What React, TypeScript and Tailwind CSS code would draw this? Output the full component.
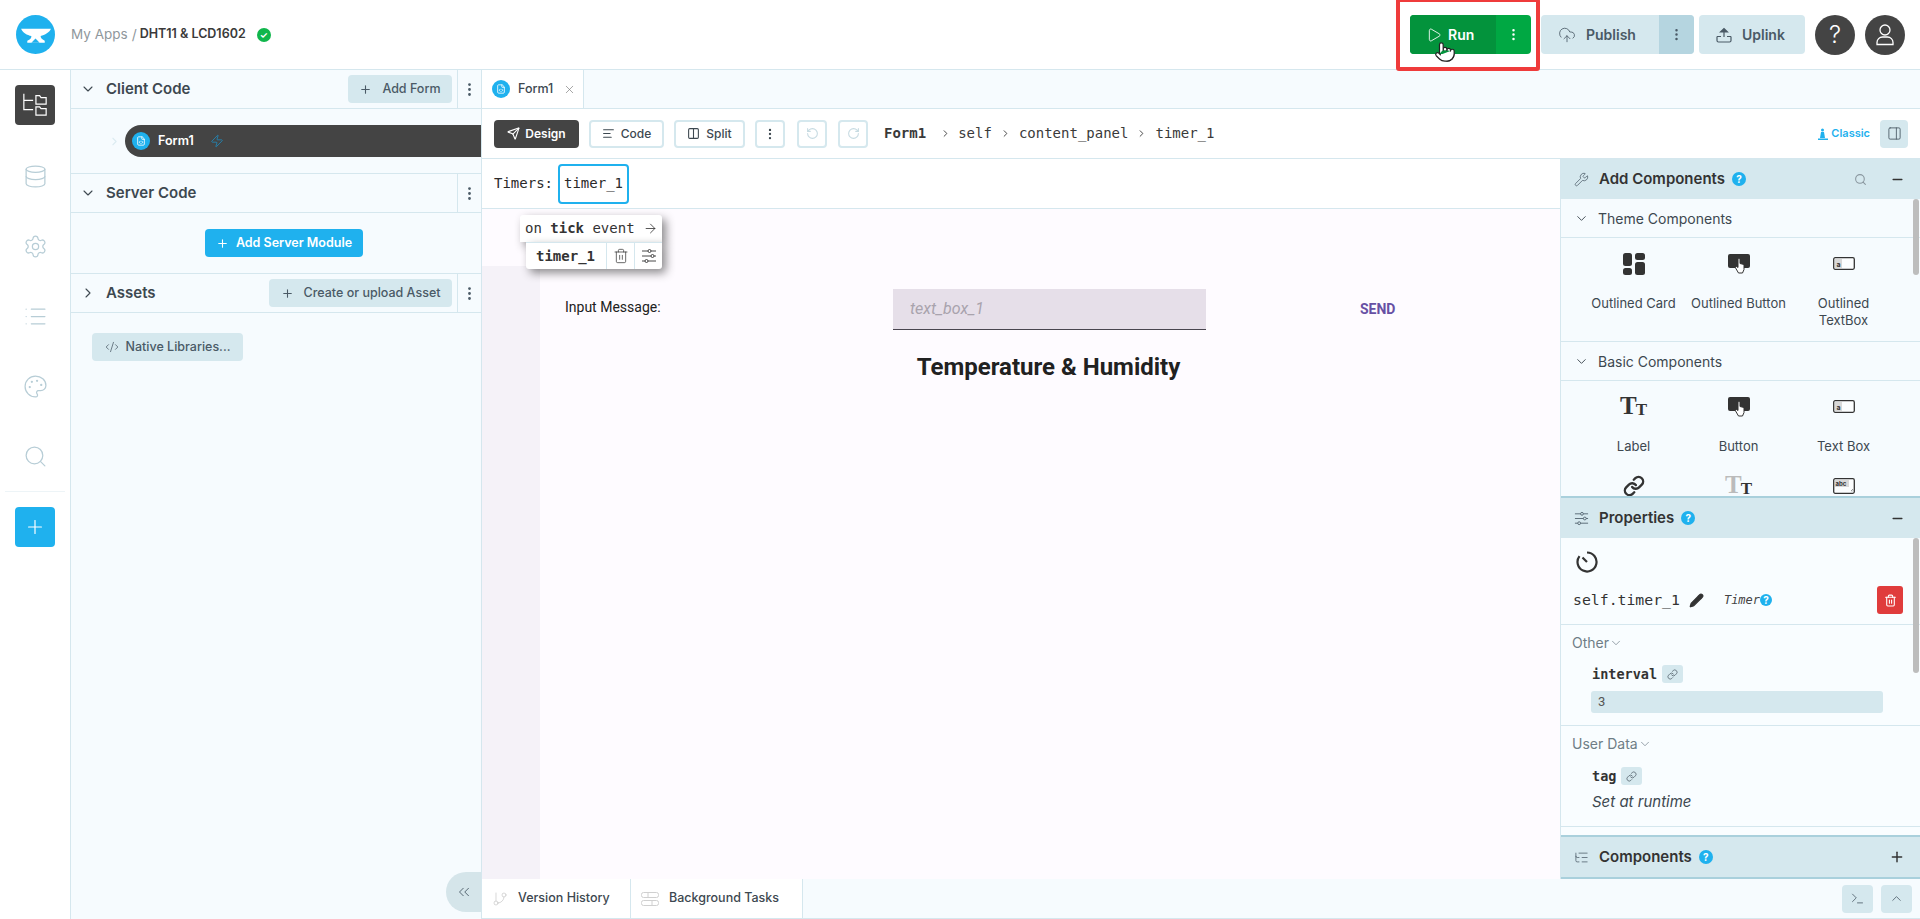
import React from "react";
import {
  AlignLeft,
  ArrowRight,
  ChevronDown,
  ChevronRight,
  ChevronUp,
  ChevronsLeft,
  CloudUpload,
  CodeXml,
  Columns2,
  Database,
  EllipsisVertical,
  FileCode,
  GitBranch,
  Link,
  List,
  ListTree,
  Minus,
  Palette,
  PanelRight,
  Pencil,
  Play,
  Plus,
  Pointer,
  RotateCcw,
  RotateCw,
  Search,
  Send,
  Settings,
  Terminal,
  Trash2,
  Wrench,
  X,
  Zap,
} from "lucide-react";

const sans = "font-['Inter','Open_Sans',sans-serif]";
const mono = "font-['DejaVu_Sans_Mono','Liberation_Mono',monospace]";

function AnvilLogo() {
  return (
    <svg viewBox="0 0 38 38" className="h-[39px] w-[39px]">
      <circle cx="19" cy="19" r="19" fill="#1fb1ee" />
      <path d="M5 13.5h29c-1 3.5-6 6-10 7 0 2 1 3 4 4.5v2H11v-2c3-1 4-2.5 4-4.5-4-.5-9-3.5-10-7z" fill="#fff" />
      <path d="M15 27l4-4 4 4z" fill="#1fb1ee" />
    </svg>
  );
}

function TreeIcon() {
  return (
    <svg viewBox="0 0 28 28" fill="none" stroke="#fff" strokeWidth="1.3" className="h-[26px] w-[28px]">
      <path d="M2 2v17h10M2 9h10" />
      <path d="M15 4h4l1.5 2H26v7H15z" />
      <path d="M15 16h4l1.5 2H26v7H15z" />
    </svg>
  );
}

function SlidersIcon({ size = 15 }: { size?: number }) {
  return (
    <svg viewBox="0 0 16 16" fill="none" stroke="currentColor" strokeWidth="0.9" width={size} height={size}>
      <path d="M1 3h6M10 3h5M1 8h9M13 8h2M1 13h3M7 13h8" />
      <circle cx="8.5" cy="3" r="1.5" />
      <circle cx="11.5" cy="8" r="1.5" />
      <circle cx="5.5" cy="13" r="1.5" />
    </svg>
  );
}

function Badge({ size = "h-[14px] w-[14px]" }: { size?: string }) {
  return (
    <span className={`${size} flex items-center justify-center rounded-full bg-[#1fb1ee] text-[10px] font-bold text-white ${sans}`}>
      ?
    </span>
  );
}

function SectionHead({ title, open = true, action }: { title: string; open?: boolean; action?: string }) {
  return (
    <div className="flex h-[39px] items-center border-b border-[#d5e7ee]">
      <div className="flex w-[25px] justify-end text-[#3d4850]">
        {open ? <ChevronDown size={16} strokeWidth={1.6} /> : <ChevronRight size={16} strokeWidth={1.6} />}
      </div>
      <span className="ml-[10px] flex-1 text-[15px] font-semibold text-[#3d4850]">{title}</span>
      {action && (
        <button className="mr-[5px] flex h-[28px] items-center gap-[10px] rounded-[4px] bg-[#d5e8ee] px-[11.5px] text-[12.5px] font-medium text-[#4a5a66]">
          <Plus size={13} />
          {action}
        </button>
      )}
      <div className="flex h-full w-[24px] items-center justify-center border-l border-[#d5e7ee] text-[#4a5a66]">
        <EllipsisVertical size={17} />
      </div>
    </div>
  );
}

function SideIcon({ children }: { children: React.ReactNode }) {
  return <div className="flex h-[70px] w-full items-center justify-center text-[#b7cdd6]">{children}</div>;
}

function Sidebar() {
  return (
    <aside className="flex w-[71px] flex-col items-center border-r border-[#d5e7ee] bg-white pt-[15px]">
      <div className="mb-[16px] flex h-[40px] w-[40px] items-center justify-center rounded-[4px] bg-[#444444]">
        <TreeIcon />
      </div>
      <div className="w-full">
        <SideIcon><Database size={25} strokeWidth={1.2} /></SideIcon>
        <SideIcon><Settings size={25} strokeWidth={1.2} /></SideIcon>
        <SideIcon><List size={25} strokeWidth={1.2} /></SideIcon>
        <SideIcon><Palette size={25} strokeWidth={1.2} /></SideIcon>
        <SideIcon><Search size={25} strokeWidth={1.2} /></SideIcon>
      </div>
      <div className="mb-[15px] h-px w-[60px] bg-[#edf4f7]" />
      <div className="flex h-[40px] w-[40px] items-center justify-center rounded-[4px] bg-[#1fb1ee] text-white">
        <Plus size={22} strokeWidth={1.3} />
      </div>
    </aside>
  );
}

function LeftPanel() {
  return (
    <section className="relative flex w-[410px] flex-col bg-[#f6fbfe]">
      <SectionHead title="Client Code" action="Add Form" />
      <div className="flex h-[65px] items-center border-b border-[#d5e7ee] pl-[37px]">
        <ChevronRight size={13} className="mr-[4px] text-[#dcebf1]" />
        <div className="flex h-[32px] flex-1 items-center rounded-l-full bg-[#444444] pl-[7px]">
          <span className="flex h-[18px] w-[18px] items-center justify-center rounded-full bg-[#1fb1ee] text-white">
            <FileCode size={10} />
          </span>
          <span className="ml-[8px] text-[12.5px] font-semibold text-white">Form1</span>
          <Zap size={14} strokeWidth={1.3} className="ml-[16px] text-[#1f8fc4]" />
        </div>
      </div>
      <SectionHead title="Server Code" />
      <div className="flex h-[61px] items-center justify-center border-b border-[#d5e7ee] pl-[16px]">
        <button className="flex h-[28px] w-[158px] items-center justify-center gap-[7px] rounded-[4px] bg-[#1fb1ee] text-[12.5px] font-semibold text-white">
          <Plus size={13} />
          Add Server Module
        </button>
      </div>
      <SectionHead title="Assets" open={false} action="Create or upload Asset" />
      <div className="pl-[21px] pt-[20px]">
        <button className="flex h-[28px] w-[151px] items-center justify-center gap-[7px] rounded-[4px] bg-[#d5e8ee] text-[12.5px] font-medium text-[#4a5a66]">
          <CodeXml size={14} strokeWidth={1.3} />
          Native Libraries...
        </button>
      </div>
      <div className="absolute bottom-[7px] right-0 flex h-[40px] w-[35px] items-center justify-center rounded-l-full bg-[#d5e5ea] text-[#4a5a66]">
        <ChevronsLeft size={18} strokeWidth={1.2} />
      </div>
    </section>
  );
}

function ToolBtn({ children, width }: { children: React.ReactNode; width: string }) {
  return (
    <button className={`flex h-[28px] items-center justify-center gap-[6px] rounded-[4px] border-2 border-[#d5e8ee] bg-white text-[12px] font-medium text-[#3d4850] ${width}`}>
      {children}
    </button>
  );
}

function Toolbar() {
  return (
    <div className="flex h-[50px] shrink-0 items-center border-b border-[#d5e7ee] bg-white pl-[12px] pr-[12px]">
      <button className="flex h-[28px] w-[85px] items-center justify-center gap-[5px] rounded-[4px] bg-[#444444] text-[12px] font-semibold text-white">
        <Send size={13} />
        Design
      </button>
      <div className="ml-[10px] flex gap-[10px]">
        <ToolBtn width="w-[75px]"><AlignLeft size={13} />Code</ToolBtn>
        <ToolBtn width="w-[71px]"><Columns2 size={13} />Split</ToolBtn>
        <ToolBtn width="w-[30px]"><EllipsisVertical size={14} /></ToolBtn>
      </div>
      <div className="ml-[12px] flex gap-[11px]">
        <ToolBtn width="w-[30px]"><RotateCcw size={13} className="text-[#c7dbe2]" /></ToolBtn>
        <ToolBtn width="w-[30px]"><RotateCw size={13} className="text-[#c7dbe2]" /></ToolBtn>
      </div>
      <div className={`ml-[16px] flex flex-1 items-center text-[14px] text-[#3a3a3a] ${mono}`}>
        <b>Form1</b>
        <ChevronRight size={11} className="ml-[14px] mr-[7px]" />
        self
        <ChevronRight size={11} className="mx-[8px]" />
        content_panel
        <ChevronRight size={11} className="mx-[8px]" />
        timer_1
      </div>
      <span className="mr-[10px] flex items-center gap-[3px] text-[11px] font-semibold text-[#1fb1ee]">
        <svg viewBox="0 0 10 12" fill="currentColor" className="h-[12px] w-[10px]">
          <circle cx="4.5" cy="2" r="1.5" />
          <path d="M3 4h3l1 6H2zM0 10.5h10V12H0z" />
        </svg>
        Classic
      </span>
      <div className="flex h-[28px] w-[28px] items-center justify-center rounded-[4px] bg-[#d5e8ee] text-[#4a5a66]">
        <PanelRight size={15} strokeWidth={1.4} />
      </div>
    </div>
  );
}

function Canvas() {
  return (
    <div className="flex flex-1 flex-col">
      <div className={`flex h-[50px] shrink-0 items-center border-b border-[#d5e7ee] bg-white pl-[12px] text-[14px] text-[#2a2a2a] ${mono}`}>
        <span>Timers:</span>
        <div className="ml-[5px] flex h-[40px] w-[71px] items-center justify-center rounded-[4px] border-2 border-[#1fb1ee]">timer_1</div>
      </div>
      <div className="relative flex flex-1 bg-[#fefbff]">
        <div className="mt-[57px] w-[58px] bg-[#f5f2f8]" />
        <div className="flex-1 pt-[80px] font-['Roboto',sans-serif]">
          <div className="flex items-start">
            <span className="ml-[25px] w-[328px] pt-[8px] text-[14px] text-[#212121]">Input Message:</span>
            <div className="flex h-[41px] w-[313px] items-center border-b border-[#49454f] bg-[#e6dfe9] pl-[17px] text-[16px] italic text-[#a9a3ad]">text_box_1</div>
            <span className="ml-[154px] pt-[10px] text-[14px] font-bold text-[#6750a4]">SEND</span>
          </div>
          <h2 className="mt-[22px] pr-[3px] text-center text-[24px] font-bold leading-[30px] text-[#212121]">Temperature &amp; Humidity</h2>
        </div>
        <div className={`absolute left-[38px] top-[6px] text-[#333] ${mono}`}>
          <div className="flex h-[27px] w-[142px] items-center justify-between rounded-t-[3px] bg-white pl-[5px] pr-[4px] text-[14px] shadow-[4px_4px_10px_rgba(0,0,0,0.45)]">
            <span>on <b className="font-semibold">tick</b> event</span>
            <ArrowRight size={15} strokeWidth={1.3} />
          </div>
          <div className="relative ml-[6px] flex h-[27px] w-[136px] items-center rounded-b-[3px] border-t border-[#d5e7ee] bg-white text-[14px] font-semibold shadow-[4px_4px_10px_rgba(0,0,0,0.45)]">
            <span className="w-[80px] pl-[10px]">timer_1</span>
            <span className="flex h-full w-[28px] items-center justify-center border-l border-[#d5e7ee]"><Trash2 size={16} strokeWidth={1.1} /></span>
            <span className="flex h-full w-[28px] items-center justify-center border-l border-[#d5e7ee]"><SlidersIcon size={16} /></span>
          </div>
        </div>
      </div>
    </div>
  );
}

function PanelHead({ icon, title, end }: { icon: React.ReactNode; title: string; end: React.ReactNode }) {
  return (
    <div className="flex h-[40px] shrink-0 items-center bg-[#d5e8ee] pl-[13px] pr-[15px] text-[#333]">
      <span className="w-[25px] text-[#4a5a66]">{icon}</span>
      <span className="text-[15px] font-semibold">{title}</span>
      <span className="ml-[7px]"><Badge /></span>
      <span className="flex-1" />
      {end}
    </div>
  );
}

function CardsIcon() {
  return (
    <svg viewBox="0 0 22 22" className="h-[22px] w-[22px]" fill="#333">
      <rect x="0" y="0" width="9" height="13" rx="2.5" />
      <rect x="12" y="0" width="10" height="7" rx="2.5" />
      <rect x="0" y="15" width="9" height="7" rx="2.5" />
      <rect x="12" y="9" width="10" height="13" rx="2.5" />
    </svg>
  );
}

function ButtonIcon() {
  return (
    <svg viewBox="0 0 22 22" className="h-[22px] w-[22px]">
      <rect x="0" y="1" width="22" height="14" rx="2" fill="#333" />
      <path d="M10 6.5a1 1 0 012 0v4l4 1v5l-1.5 3.5h-4L7 14l1-1 2 1.5z" fill="#fff" stroke="#333" strokeWidth="1" />
    </svg>
  );
}

function TextBoxIcon() {
  return (
    <svg viewBox="0 0 22 14" className="h-[14px] w-[22px]">
      <rect x="0.7" y="0.7" width="20.6" height="11.6" rx="1.5" fill="#fbfdfe" stroke="#333" strokeWidth="1.3" />
      <rect x="2" y="2" width="7" height="9" fill="#d8d8d8" />
      <text x="3.5" y="9.5" fontSize="7" fontWeight="bold" fill="#333" fontFamily="Inter">a</text>
    </svg>
  );
}

function TextAreaIcon() {
  return (
    <svg viewBox="0 0 22 16" className="h-[16px] w-[22px]">
      <rect x="0.7" y="0.7" width="20.6" height="14.6" rx="1.5" fill="#fbfdfe" stroke="#333" strokeWidth="1.3" />
      <rect x="2" y="2" width="14" height="7" fill="#d8d8d8" />
      <text x="2.5" y="8" fontSize="6" fontWeight="bold" fill="#333" fontFamily="Inter">abc</text>
      <path d="M18 13l2-2M19 13.5l1-1" stroke="#555" strokeWidth="0.6" />
    </svg>
  );
}

function TtIcon({ faded = false }: { faded?: boolean }) {
  return (
    <div className="flex h-[22px] items-end font-['Liberation_Serif',serif] font-bold leading-none text-[#333]">
      <span className={`text-[25px] ${faded ? "text-[#bbbbbb]" : ""}`}>T</span>
      <span className="-ml-[1px] text-[17px]">T</span>
    </div>
  );
}

function CompItem({ icon, label }: { icon: React.ReactNode; label: string }) {
  return (
    <div className="flex w-[105px] flex-col items-center text-center">
      <div className="flex h-[22px] items-center">{icon}</div>
      <div className="mt-[20px] whitespace-pre-line text-[13px] leading-[17px] text-[#3d4850]">{label}</div>
    </div>
  );
}

function CompGroupHead({ title }: { title: string }) {
  return (
    <div className="flex h-[39px] items-center gap-[9px] border-b border-[#d5e7ee] pl-[13px] text-[14px] text-[#3d4850]">
      <ChevronDown size={15} strokeWidth={1.5} />
      {title}
    </div>
  );
}

function Scrollbar({ height }: { height: string }) {
  return <div className={`absolute right-[1px] top-0 w-[6px] rounded-full bg-[#bdbdbd] ${height}`} />;
}

function AddComponents() {
  return (
    <div className="relative h-[297px] shrink-0 overflow-hidden bg-[#f6fbfe]">
      <Scrollbar height="h-[76px]" />
      <CompGroupHead title="Theme Components" />
      <div className="flex h-[104px] items-start border-b border-[#d5e7ee] pl-[20px] pt-[15px]">
        <CompItem icon={<CardsIcon />} label="Outlined Card" />
        <CompItem icon={<ButtonIcon />} label="Outlined Button" />
        <CompItem icon={<TextBoxIcon />} label={"Outlined\nTextBox"} />
      </div>
      <CompGroupHead title="Basic Components" />
      <div className="flex items-start pl-[20px] pt-[15px]">
        <CompItem icon={<TtIcon />} label="Label" />
        <CompItem icon={<ButtonIcon />} label="Button" />
        <CompItem icon={<TextBoxIcon />} label="Text Box" />
      </div>
      <div className="flex items-start pl-[20px] pt-[20px]">
        <CompItem icon={<Link size={22} strokeWidth={2.6} className="text-[#333]" />} label="" />
        <CompItem icon={<TtIcon faded />} label="" />
        <CompItem icon={<TextAreaIcon />} label="" />
      </div>
    </div>
  );
}

function LinkChip() {
  return (
    <span className="ml-[5px] flex h-[18px] w-[21px] items-center justify-center rounded-[3px] bg-[#d5e8ee] text-[#66757f]">
      <Link size={11} />
    </span>
  );
}

function Properties() {
  return (
    <div className="relative min-h-0 flex-1 overflow-hidden bg-[#f9fdff]">
      <Scrollbar height="h-[135px]" />
      <div className="h-[87px] border-b border-[#d5e7ee] pl-[15px] pt-[13px]">
        <svg viewBox="0 0 22 22" fill="none" stroke="#333" strokeWidth="2.2" className="h-[22px] w-[22px]">
          <path d="M11 1.5a9.5 9.5 0 11-7.5 3.7" />
          <path d="M6.5 6.5L11 11" />
        </svg>
        <div className="mt-[13px] flex items-center pr-[17px]">
          <span className={`-ml-[3px] text-[14.8px] text-[#333] ${mono}`}>self.timer_1</span>
          <Pencil size={15} fill="#333" className="ml-[9px] text-[#333]" />
          <span className={`ml-[20px] text-[12px] italic text-[#444] ${mono}`}>Timer</span>
          <Badge size="h-[12px] w-[12px]" />
          <span className="flex-1" />
          <span className="flex h-[28px] w-[26px] items-center justify-center rounded-[3px] bg-[#e03c3c] text-white">
            <Trash2 size={13} />
          </span>
        </div>
      </div>
      <div className="h-[101px] border-b border-[#d5e7ee] pl-[11px] pt-[7px]">
        <div className="flex items-center text-[14px] text-[#6f7d86]">Other<ChevronDown size={14} strokeWidth={1.2} /></div>
        <div className="ml-[20px] mt-[12px] flex h-[18px] items-center">
          <b className={`text-[13.5px] font-semibold text-[#333] ${mono}`}>interval</b>
          <LinkChip />
        </div>
        <div className="ml-[19px] mt-[8px] flex h-[22px] w-[292px] items-center rounded-[3px] bg-[#d5e8ee] pl-[7px] font-['Roboto',sans-serif] text-[13px] text-[#555]">3</div>
      </div>
      <div className="h-[101px] border-b border-[#d5e7ee] pl-[11px] pt-[7px]">
        <div className="flex items-center text-[14px] text-[#6f7d86]">User Data<ChevronDown size={14} strokeWidth={1.2} /></div>
        <div className="ml-[20px] mt-[13px] flex h-[18px] items-center">
          <b className={`text-[13.5px] font-semibold text-[#333] ${mono}`}>tag</b>
          <LinkChip />
        </div>
        <div className="ml-[20px] mt-[8px] text-[15px] italic leading-[18px] text-[#3d4850]">Set at runtime</div>
      </div>
    </div>
  );
}

function RightPanel() {
  return (
    <aside className="flex w-[360px] shrink-0 flex-col border-l border-[#d5e7ee]">
      <PanelHead
        icon={<Wrench size={15} strokeWidth={1.2} />}
        title="Add Components"
        end={
          <span className="flex items-center gap-[23px]">
            <Search size={13} className="text-[#8a979f]" />
            <Minus size={15} strokeWidth={2.2} className="text-[#333]" />
          </span>
        }
      />
      <AddComponents />
      <div className="h-[2px] shrink-0 bg-[#a9d0dc]" />
      <PanelHead icon={<SlidersIcon />} title="Properties" end={<Minus size={15} strokeWidth={2.2} className="text-[#333]" />} />
      <Properties />
      <div className="h-[2px] shrink-0 bg-[#a9d0dc]" />
      <PanelHead icon={<ListTree size={15} strokeWidth={1.2} />} title="Components" end={<Plus size={16} strokeWidth={2.2} className="text-[#333]" />} />
      <div className="h-[2px] shrink-0 bg-[#a9d0dc]" />
    </aside>
  );
}

function BottomBar() {
  return (
    <div className="flex h-[40px] shrink-0 items-center border-b border-[#d5e7ee] bg-[#f6fbfe]">
      <div className="flex h-full w-[149px] items-center gap-[10px] border-r border-[#d5e7ee] bg-white pl-[10px] text-[12.5px] font-medium text-[#3d4850]">
        <GitBranch size={16} strokeWidth={1.1} className="text-[#c9c9c9]" />
        Version History
      </div>
      <div className="flex h-full w-[172px] items-center gap-[10px] border-r border-[#d5e7ee] bg-white pl-[10px] text-[12.5px] font-medium text-[#3d4850]">
        <svg viewBox="0 0 18 14" fill="none" stroke="#d0d0d0" strokeWidth="1" className="h-[14px] w-[18px]">
          <rect x="0.5" y="0.5" width="17" height="5" rx="2" />
          <rect x="0.5" y="8.5" width="17" height="5" rx="2" />
          <path d="M7 1v4M11 9v4" />
        </svg>
        Background Tasks
      </div>
      <span className="flex-1" />
      <div className="mr-[8px] flex h-[28px] w-[31px] items-center justify-center rounded-[4px] bg-[#d5e8ee] text-[#4a5a66]">
        <Terminal size={15} strokeWidth={1.3} />
      </div>
      <div className="mr-[8px] flex h-[28px] w-[31px] items-center justify-center rounded-[4px] bg-[#d5e8ee] text-[#4a5a66]">
        <ChevronUp size={15} strokeWidth={1.3} />
      </div>
    </div>
  );
}

function Header() {
  return (
    <header className="relative flex h-[70px] shrink-0 items-center border-b border-[#d5e7ee] bg-white pl-[16px] pr-[15px]">
      <AnvilLogo />
      <span className="ml-[16px] text-[13.5px] text-[#8f979c]">My Apps</span>
      <span className="ml-[4px] text-[14px] text-[#8f979c]">/</span>
      <span className="ml-[3px] text-[12.5px] font-semibold text-[#3a3a3a]">DHT11 &amp; LCD1602</span>
      <span className="ml-[11px] flex h-[14px] w-[14px] items-center justify-center rounded-full bg-[#10b64c] text-[9px] font-bold text-white">✓</span>
      <span className="flex-1" />
      <div className="relative flex h-[39px] w-[121px] overflow-visible rounded-[4px] bg-[#00a843] text-white">
        <div className="flex w-[86px] items-center gap-[6px] rounded-l-[4px] bg-[#03933c] pl-[16px] text-[14px] font-semibold">
          <Play size={16} strokeWidth={1.3} />
          Run
        </div>
        <div className="flex flex-1 items-center justify-center"><EllipsisVertical size={15} /></div>
        <Pointer size={22} fill="#fff" strokeWidth={1.3} className="absolute left-[24px] top-[26px] text-[#222]" />
        <div className="absolute -left-[14px] -top-[17px] h-[73px] w-[144px] rounded-[3px] border-[4px] border-[#ef3b3b]" />
      </div>
      <div className="ml-[10px] flex h-[39px] w-[153px] overflow-hidden rounded-[4px] bg-[#d5e8ee] text-[14px] font-semibold text-[#4a5a66]">
        <div className="flex flex-1 items-center gap-[10px] pl-[17px]">
          <CloudUpload size={18} strokeWidth={1.1} />
          Publish
        </div>
        <div className="flex w-[35px] items-center justify-center bg-[#b5d5e0]"><EllipsisVertical size={15} /></div>
      </div>
      <div className="ml-[5px] flex h-[39px] w-[106px] items-center gap-[10px] rounded-[4px] bg-[#d5e8ee] pl-[17px] text-[14px] font-semibold text-[#4a5a66]">
        <svg viewBox="0 0 16 16" fill="none" stroke="currentColor" strokeWidth="1.2" className="h-[16px] w-[16px]">
          <path d="M8 10V1.5M4.5 5L8 1.5 11.5 5z" fill="currentColor" />
          <path d="M1 9.5h4M11 9.5h4M1 9.5v4A1.5 1.5 0 002.5 15h11a1.5 1.5 0 001.5-1.500v-4" />
        </svg>
        Uplink
      </div>
      <div className="ml-[10px] flex h-[40px] w-[40px] items-center justify-center rounded-full bg-[#444444] text-[24px] font-light text-white">?</div>
      <div className="ml-[10px] flex h-[40px] w-[40px] items-center justify-center rounded-full bg-[#444444]">
        <svg viewBox="0 0 20 22" fill="none" stroke="#fff" strokeWidth="1.3" className="h-[22px] w-[20px]">
          <circle cx="10" cy="6" r="5" />
          <path d="M2 20.5v-2A5.5 5.5 0 017.500 13h5a5.5 5.5 0 015.500 5.500v2z" />
        </svg>
      </div>
    </header>
  );
}

export default function App() {
  return (
    <div className={`flex h-[919px] w-[1920px] flex-col overflow-hidden bg-white ${sans}`}>
      <Header />
      <div className="flex min-h-0 flex-1">
        <Sidebar />
        <LeftPanel />
        <main className="flex min-w-0 flex-1 flex-col border-l border-[#d5e7ee]">
          <div className="flex h-[39px] shrink-0 border-b border-[#d5e7ee] bg-[#f6fbfe]">
            <div className="flex w-[102px] items-center border-r border-[#d5e7ee] bg-white pl-[10px] text-[12.5px] font-medium text-[#3d4850]">
              <span className="flex h-[18px] w-[18px] items-center justify-center rounded-full bg-[#1fb1ee] text-white"><FileCode size={10} /></span>
              <span className="ml-[8px]">Form1</span>
              <X size={13} strokeWidth={1.2} className="ml-[10px] text-[#777]" />
            </div>
          </div>
          <Toolbar />
          <div className="flex min-h-0 flex-1">
            <Canvas />
            <RightPanel />
          </div>
          <BottomBar />
        </main>
      </div>
    </div>
  );
}
